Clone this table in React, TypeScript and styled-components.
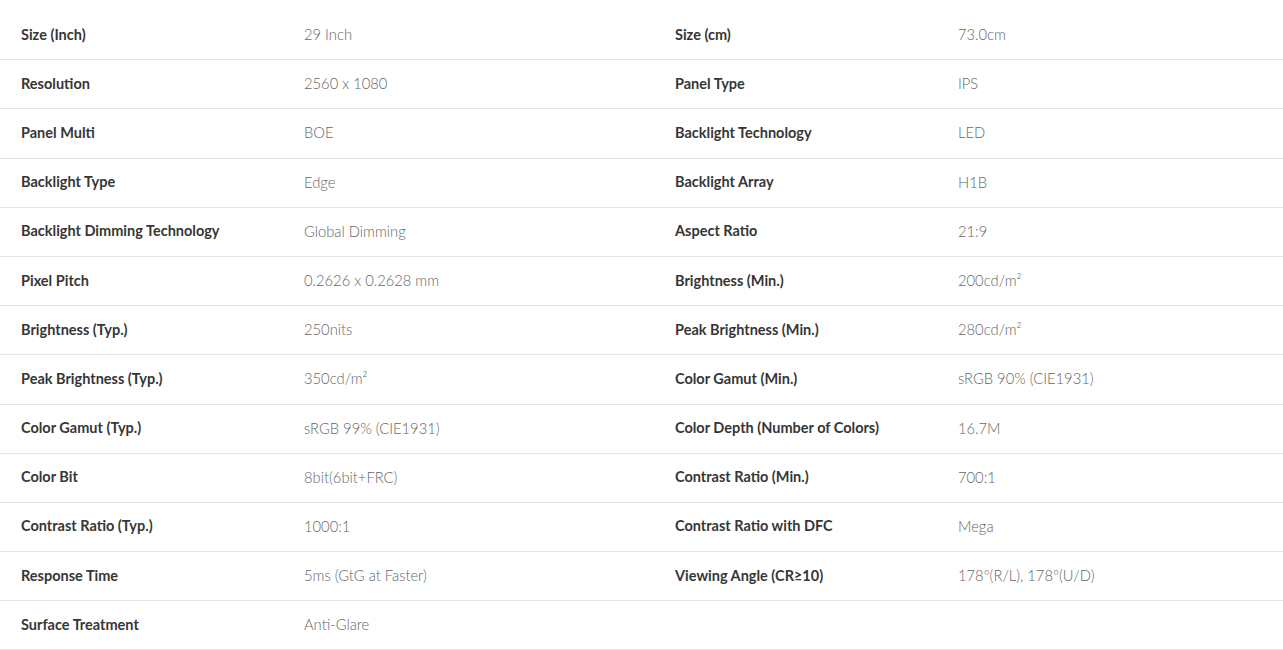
import React from "react";
import styled, { createGlobalStyle } from "styled-components";

const Global = createGlobalStyle`
  html, body { margin: 0; padding: 0; background: #fff; }
  body { font-family: Lato, "Open Sans", sans-serif; }
`;

const Table = styled.div`
  display: grid;
  grid-template-columns: 283px 371px 283px 1fr;
  padding-top: 11px;
  width: 1283px;
`;

const Row = styled.div`
  display: contents;
`;

const Cell = styled.div<{ $label?: boolean }>`
  height: 49.2px;
  box-sizing: border-box;
  display: flex;
  align-items: center;
  padding: 0 0 2px 21px;
  border-bottom: 1px solid #e4e4e4;
  font-size: ${(p) => (p.$label ? "14.5px" : "14.75px")};
  font-weight: ${(p) => (p.$label ? 700 : 300)};
  color: ${(p) => (p.$label ? "#363636" : "#666")};
  white-space: nowrap;
`;

const rows: [string, string, string, string][] = [
  ["Size (Inch)", "29 Inch", "Size (cm)", "73.0cm"],
  ["Resolution", "2560 x 1080", "Panel Type", "IPS"],
  ["Panel Multi", "BOE", "Backlight Technology", "LED"],
  ["Backlight Type", "Edge", "Backlight Array", "H1B"],
  ["Backlight Dimming Technology", "Global Dimming", "Aspect Ratio", "21:9"],
  ["Pixel Pitch", "0.2626 x 0.2628 mm", "Brightness (Min.)", "200cd/m²"],
  ["Brightness (Typ.)", "250nits", "Peak Brightness (Min.)", "280cd/m²"],
  ["Peak Brightness (Typ.)", "350cd/m²", "Color Gamut (Min.)", "sRGB 90% (CIE1931)"],
  ["Color Gamut (Typ.)", "sRGB 99% (CIE1931)", "Color Depth (Number of Colors)", "16.7M"],
  ["Color Bit", "8bit(6bit+FRC)", "Contrast Ratio (Min.)", "700:1"],
  ["Contrast Ratio (Typ.)", "1000:1", "Contrast Ratio with DFC", "Mega"],
  ["Response Time", "5ms (GtG at Faster)", "Viewing Angle (CR≥10)", "178º(R/L), 178º(U/D)"],
  ["Surface Treatment", "Anti-Glare", "", ""],
];

export default function App() {
  return (
    <>
      <Global />
      <Table>
        {rows.map((r, i) => (
          <Row key={i}>
            <Cell $label>{r[0]}</Cell>
            <Cell>{r[1]}</Cell>
            <Cell $label>{r[2]}</Cell>
            <Cell>{r[3]}</Cell>
          </Row>
        ))}
      </Table>
    </>
  );
}
